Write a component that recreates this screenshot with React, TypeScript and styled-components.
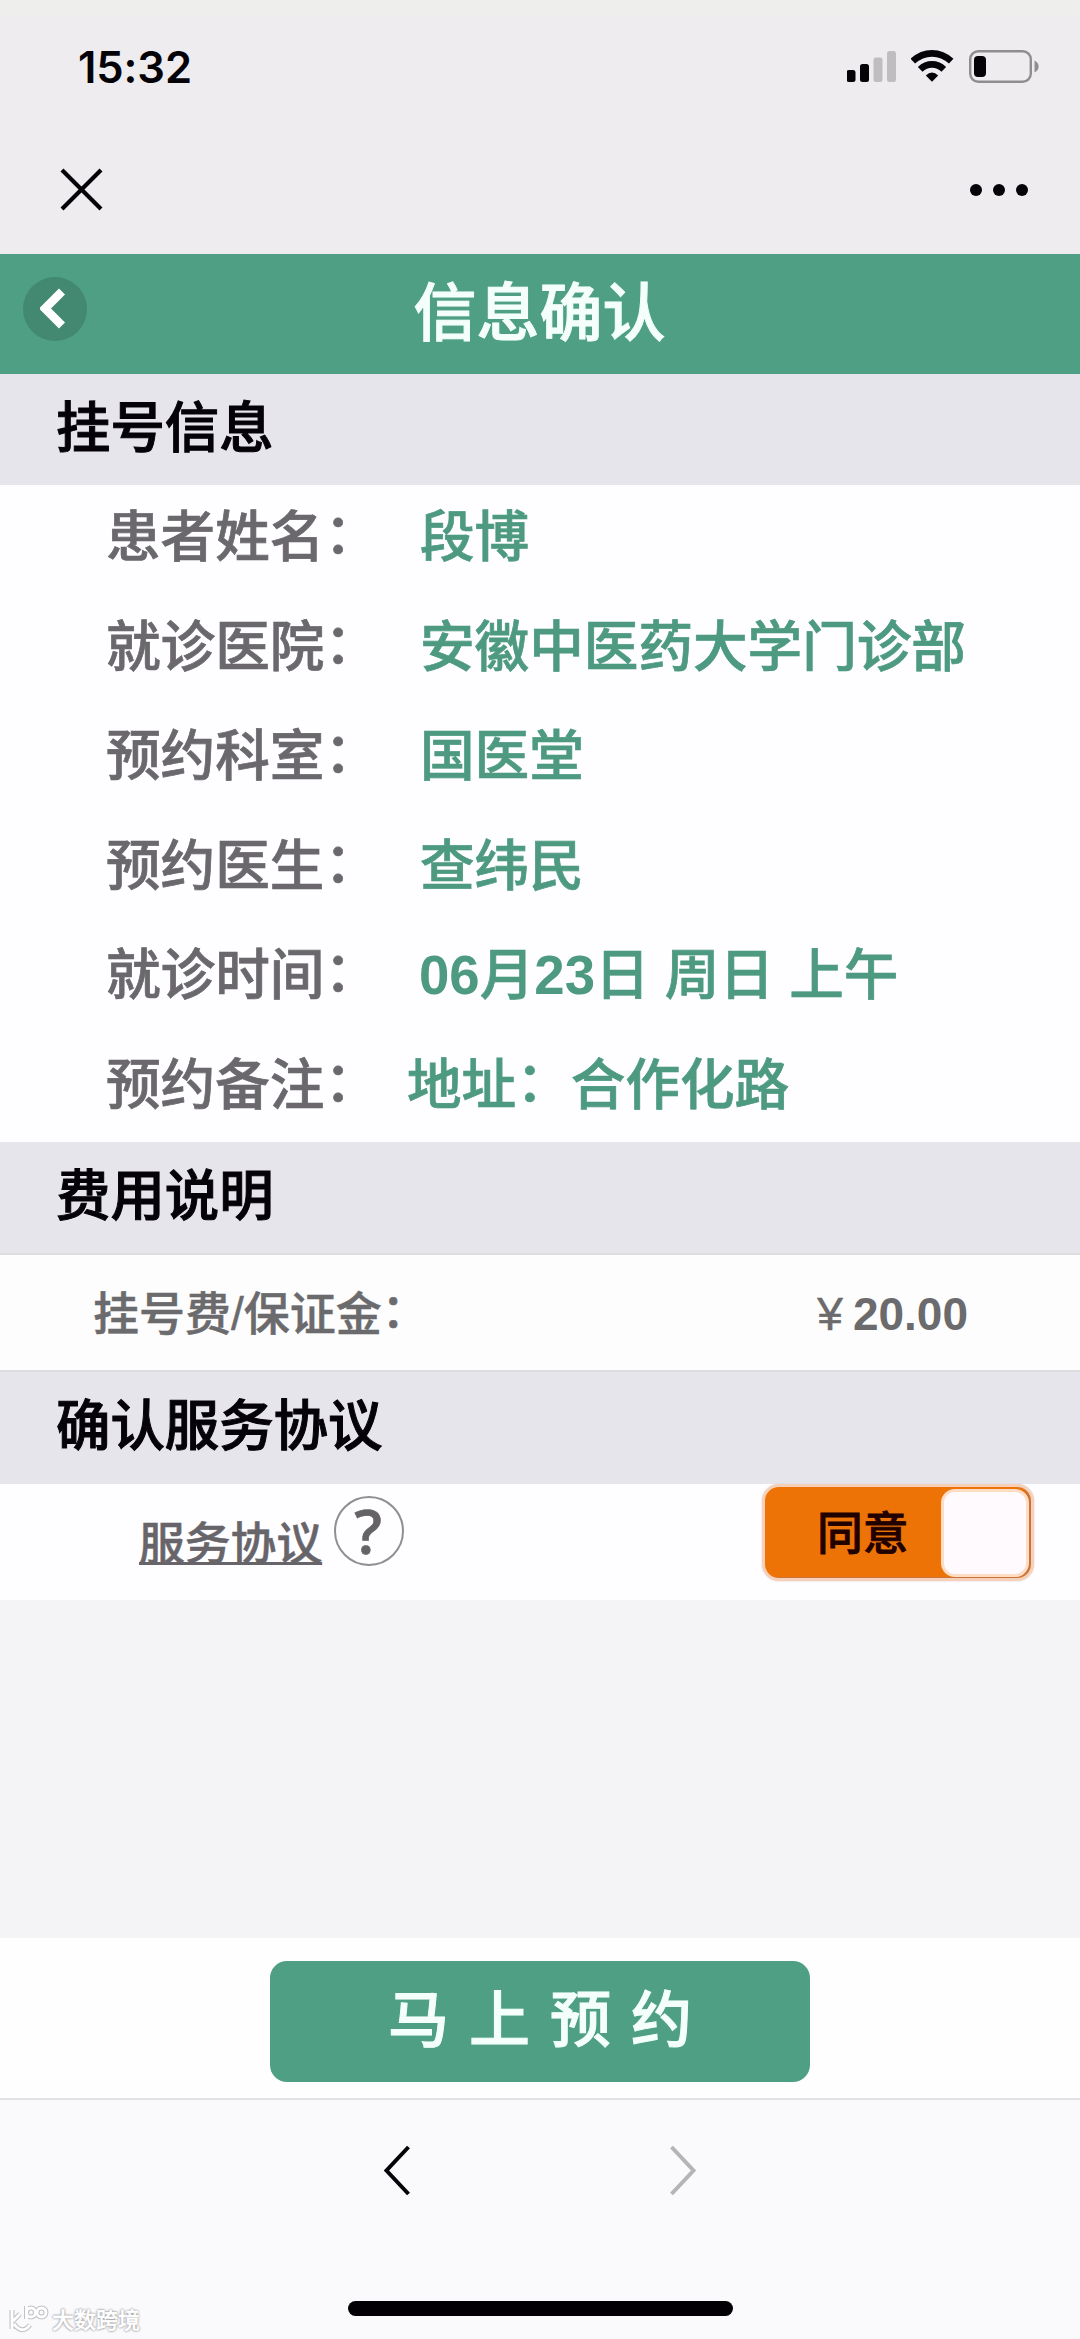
import React from "react";
import styled, { createGlobalStyle } from "styled-components";

const GREEN = "#4e9f84";

const GlobalStyle = createGlobalStyle`
  * { box-sizing: border-box; }
  body {
    margin: 0;
    background: #f4f3f6;
    font-family: "Liberation Sans", "Noto Sans CJK SC", sans-serif;
  }
`;

const Screen = styled.div`
  position: relative;
  display: flex;
  flex-direction: column;
  width: 1080px;
  height: 2339px;
  overflow: hidden;
  background: #f4f3f6;
`;

const StatusBar = styled.header`
  display: flex;
  align-items: flex-start;
  justify-content: space-between;
  height: 134px;
  padding: 50px 40px 0 78px;
  background: linear-gradient(#eeeeed 0 16px, #eeecef 16px);
`;

const Clock = styled.span`
  font: 600 43.5px/34px Inter, sans-serif;
  letter-spacing: -0.1px;
  color: #050308;
`;

const StatusIcons = styled.div`
  display: flex;
  gap: 14px;
`;

const BrowserBar = styled.div`
  display: flex;
  align-items: center;
  justify-content: space-between;
  height: 120px;
  padding: 0 51px 10px 60px;
  background: #eeecef;
`;

const TitleBar = styled.div`
  display: grid;
  grid-template-columns: 200px 1fr 200px;
  align-items: center;
  height: 120px;
  padding: 0 0 11px 23px;
  background: ${GREEN};
`;

const BackButton = styled.button`
  display: flex;
  align-items: center;
  justify-content: center;
  width: 64px;
  height: 64px;
  padding: 0 2px 0 0;
  border: 0;
  border-radius: 50%;
  background: #438870;
`;

const PageTitle = styled.h1`
  margin: 9px 0 0 -24px;
  font-size: 63px;
  font-weight: 500;
  line-height: 80px;
  text-align: center;
  white-space: nowrap;
  color: #f4fffb;
  -webkit-text-stroke: 1px #f4fffb;
`;

const SectionHeader = styled.h2<{ $height: number; $ruled?: boolean }>`
  height: ${(p) => p.$height}px;
  margin: 0;
  padding: 15px 0 0 56px;
  border-bottom: ${(p) => (p.$ruled ? "2px solid #dddcdf" : "0")};
  background: #e7e5ec;
  font-size: 54.4px;
  font-weight: 500;
  line-height: 80px;
  color: #050308;
  -webkit-text-stroke: 1px #050308;
`;

const Details = styled.dl`
  display: flex;
  flex-direction: column;
  height: 657px;
  margin: 0;
  background: #fefdff;
`;

const DetailRow = styled.div<{ $indent: number }>`
  display: grid;
  grid-template-columns: ${(p) => p.$indent}px 1fr;
  height: 109.5px;
  padding: 13px 0 0 106px;
  font-size: 54.6px;
  font-weight: 500;
  line-height: 80px;
  white-space: nowrap;
  -webkit-text-stroke-width: 0.7px;
`;

const Label = styled.dt`
  color: #6b686d;
`;

const Value = styled.dd`
  margin: 0;
  color: #4d9a80;
`;

const Num = styled.span`
  font-weight: 700;
  -webkit-text-stroke-width: 0;
`;

const Colon = styled.span`
  line-height: 1;
  vertical-align: 0.06em;
`;

const FeeRow = styled.div`
  display: flex;
  justify-content: space-between;
  height: 117px;
  padding: 27px 112px 0 93px;
  border-bottom: 2px solid #dddcdf;
  background: #fefdfe;
  font-size: 46px;
  font-weight: 500;
  line-height: 64px;
  color: #6b6b6d;
  -webkit-text-stroke-width: 0.5px;
`;

const Price = styled.span`
  display: flex;
  gap: 10px;
`;

const AgreementRow = styled.div`
  display: flex;
  justify-content: space-between;
  height: 116px;
  padding: 0 47px 0 139px;
  background: #fefdff;
`;

const AgreementLink = styled.div`
  display: flex;
  gap: 12px;
  padding-top: 12px;
`;

const LinkText = styled.a`
  height: 70px;
  margin-top: 17px;
  font-size: 45.8px;
  font-weight: 500;
  line-height: 64px;
  color: #67656a;
  -webkit-text-stroke-width: 0.5px;
  text-decoration: underline;
  text-decoration-thickness: 3px;
  text-underline-offset: 2px;
  text-decoration-skip-ink: none;
`;

const Help = styled.span`
  display: flex;
  align-items: center;
  justify-content: center;
  width: 70px;
  height: 70px;
  padding-right: 2px;
  border: 2px solid #8f8e91;
  border-radius: 50%;
  font: 600 61px/64px "Open Sans", sans-serif;
  color: #656366;
  -webkit-text-stroke-width: 0.6px;
`;

const Toggle = styled.button`
  display: flex;
  align-items: center;
  justify-content: space-between;
  width: 272px;
  height: 97px;
  margin: 0 -1px 0 0;
  padding: 0 2px 0 52px;
  border: 3px solid #f6d0b8;
  border-radius: 17px;
  background: #ee7306;
  box-shadow: inset -3px -1px 0 #c8753b, 0 0 2px #d8cfcc;
  font-family: inherit;
  font-size: 45.8px;
  font-weight: 500;
  line-height: 60px;
  color: #210000;
  -webkit-text-stroke-width: 0.8px;
`;

const ToggleText = styled.span`
  padding-top: 4px;
`;

const Knob = styled.span`
  width: 88px;
  height: 88px;
  border: 3px solid #ffdcc4;
  border-radius: 14px;
  background: #fefafe;
`;

const Spacer = styled.div`
  height: 338px;
`;

const ActionBar = styled.div`
  display: flex;
  justify-content: center;
  height: 162px;
  padding-top: 23px;
  border-bottom: 2px solid #e2e1e5;
  background: #fefefe;
`;

const BookButton = styled.button`
  width: 540px;
  height: 121px;
  padding: 0 0 2px 20px;
  border: 0;
  border-radius: 17px;
  background: ${GREEN};
  font-family: inherit;
  font-size: 61px;
  font-weight: 500;
  letter-spacing: 20px;
  line-height: 80px;
  color: #f4fffb;
  -webkit-text-stroke: 1px #f4fffb;
`;

const NavBar = styled.nav`
  display: flex;
  justify-content: center;
  gap: 258px;
  height: 201px;
  padding-top: 45px;
  background: #faf9fc;
`;

const BottomArea = styled.footer`
  display: grid;
  grid-template-columns: 1fr 385px 1fr;
  flex: 1;
  background: #faf9fc;
`;

const Watermark = styled.div`
  display: flex;
  align-items: flex-start;
  gap: 3px;
  padding: 3px 0 0 8px;
  font-size: 22px;
  font-weight: 500;
  line-height: 33px;
  color: #ffffff;
  -webkit-text-stroke-width: 0.4px;
  text-shadow: 0 0 2px #98979b, 0 0 2px #a5a4a8, 0 0 3px #b5b4b8;
`;

const HomeIndicator = styled.div`
  height: 15px;
  border-radius: 8px;
  background: #020005;
`;

const details = [
  { label: "患者姓名：", value: "段博", indent: 314 },
  { label: "就诊医院：", value: "安徽中医药大学门诊部", indent: 314 },
  { label: "预约科室：", value: "国医堂", indent: 314 },
  { label: "预约医生：", value: "查纬民", indent: 314 },
  { label: "就诊时间：", value: "06月23日 周日 上午", indent: 313 },
  { label: "预约备注：", value: "地址：合作化路", indent: 301 },
];

// Digits are set bold and full-width colons are raised to the middle of the line.
const typeset = (text: string) =>
  text.split(/(\d+|：)/).map((part, i) => {
    if (part === "：") return <Colon key={i}>{part}</Colon>;
    return /^\d+$/.test(part) ? <Num key={i}>{part}</Num> : part;
  });

const Signal = () => (
  <svg width="50" height="33" viewBox="0 0 50 33">
    <rect x="-0.5" y="20" width="9" height="12" rx="2.5" fill="#050308" />
    <rect x="13" y="14" width="9" height="18" rx="2.5" fill="#050308" />
    <rect x="26.5" y="7.5" width="9" height="24.5" rx="2.5" fill="#bfbdc0" />
    <rect x="40" y="1" width="9" height="31" rx="2.5" fill="#bfbdc0" />
  </svg>
);

const Wifi = () => (
  <svg width="44" height="33" viewBox="1 0 44 33">
    <g fill="none" stroke="#050308" strokeWidth="6.6">
      <path d="M2.8 11.2C14 0.7 30 0.7 41.2 11.2" />
      <path d="M10.2 19.4C17 12.7 27 12.7 33.8 19.4" />
    </g>
    <path d="M15.8 25.4Q22 19.4 28.2 25.4L22 31.8Z" fill="#050308" />
  </svg>
);

const Battery = () => (
  <svg width="71" height="34" viewBox="0 0 71 34">
    <rect x="1.2" y="1.2" width="60.6" height="30.6" rx="8" fill="none" stroke="#8f8d90" strokeWidth="2.4" />
    <rect x="5" y="6" width="12" height="21" rx="4" fill="#050308" />
    <path d="M65.5 10.5C71 13 71 20 65.5 22.5Z" fill="#8f8d90" />
  </svg>
);

export default function App() {
  return (
    <>
      <GlobalStyle />
      <Screen>
        <StatusBar>
          <Clock>15:32</Clock>
          <StatusIcons>
            <Signal />
            <Wifi />
            <Battery />
          </StatusIcons>
        </StatusBar>
        <BrowserBar>
          <svg width="43" height="43" viewBox="0 0 43 43">
            <path d="M2 2L41 41M41 2L2 41" stroke="#050308" strokeWidth="4.2" />
          </svg>
          <svg width="60" height="14" viewBox="0 0 60 14" fill="#050308">
            <circle cx="7" cy="8" r="6" />
            <circle cx="30" cy="8" r="6" />
            <circle cx="53" cy="8" r="6" />
          </svg>
        </BrowserBar>
        <TitleBar>
          <BackButton aria-label="返回">
            <svg width="28" height="42" viewBox="0 0 28 42">
              <path d="M22 3.5L5 20.5L22 37.5" fill="none" stroke="#fff" strokeWidth="8.5" />
            </svg>
          </BackButton>
          <PageTitle>信息确认</PageTitle>
        </TitleBar>
        <SectionHeader $height={111}>挂号信息</SectionHeader>
        <Details>
          {details.map((d) => (
            <DetailRow key={d.label} $indent={d.indent}>
              <Label>{typeset(d.label)}</Label>
              <Value>{typeset(d.value)}</Value>
            </DetailRow>
          ))}
        </Details>
        <SectionHeader $height={113} $ruled>
          费用说明
        </SectionHeader>
        <FeeRow>
          <span>{typeset("挂号费/保证金：")}</span>
          <Price>
            <span>¥</span>
            <Num>20.00</Num>
          </Price>
        </FeeRow>
        <SectionHeader $height={112}>确认服务协议</SectionHeader>
        <AgreementRow>
          <AgreementLink>
            <LinkText>服务协议</LinkText>
            <Help>?</Help>
          </AgreementLink>
          <Toggle>
            <ToggleText>同意</ToggleText>
            <Knob />
          </Toggle>
        </AgreementRow>
        <Spacer />
        <ActionBar>
          <BookButton>马上预约</BookButton>
        </ActionBar>
        <NavBar>
          <svg width="28" height="51" viewBox="0 0 28 51">
            <path d="M25.5 2L3.5 25.5L25.5 49" fill="none" stroke="#050308" strokeWidth="4" />
          </svg>
          <svg width="28" height="51" viewBox="0 0 28 51">
            <path d="M2.5 2L24.5 25.5L2.5 49" fill="none" stroke="#b5b4b7" strokeWidth="4" />
          </svg>
        </NavBar>
        <BottomArea>
          <Watermark>
            <svg width="41" height="32" viewBox="0 0 41 32" fill="none">
              <g stroke="#c3c2c6" strokeWidth="5">
                <path d="M4 6V25M12 10L5 17M6 20Q14 31 22 21" />
                <circle cx="23" cy="8.5" r="4.5" />
                <circle cx="33.5" cy="8.5" r="4.5" />
                <path d="M18.5 2V15" />
              </g>
              <g stroke="#fff" strokeWidth="2.8">
                <path d="M4 6V25M12 10L5 17M6 20Q14 31 22 21" />
                <circle cx="23" cy="8.5" r="4.5" />
                <circle cx="33.5" cy="8.5" r="4.5" />
                <path d="M18.5 2V15" />
              </g>
            </svg>
            <span>大数跨境</span>
          </Watermark>
          <HomeIndicator />
        </BottomArea>
      </Screen>
    </>
  );
}
